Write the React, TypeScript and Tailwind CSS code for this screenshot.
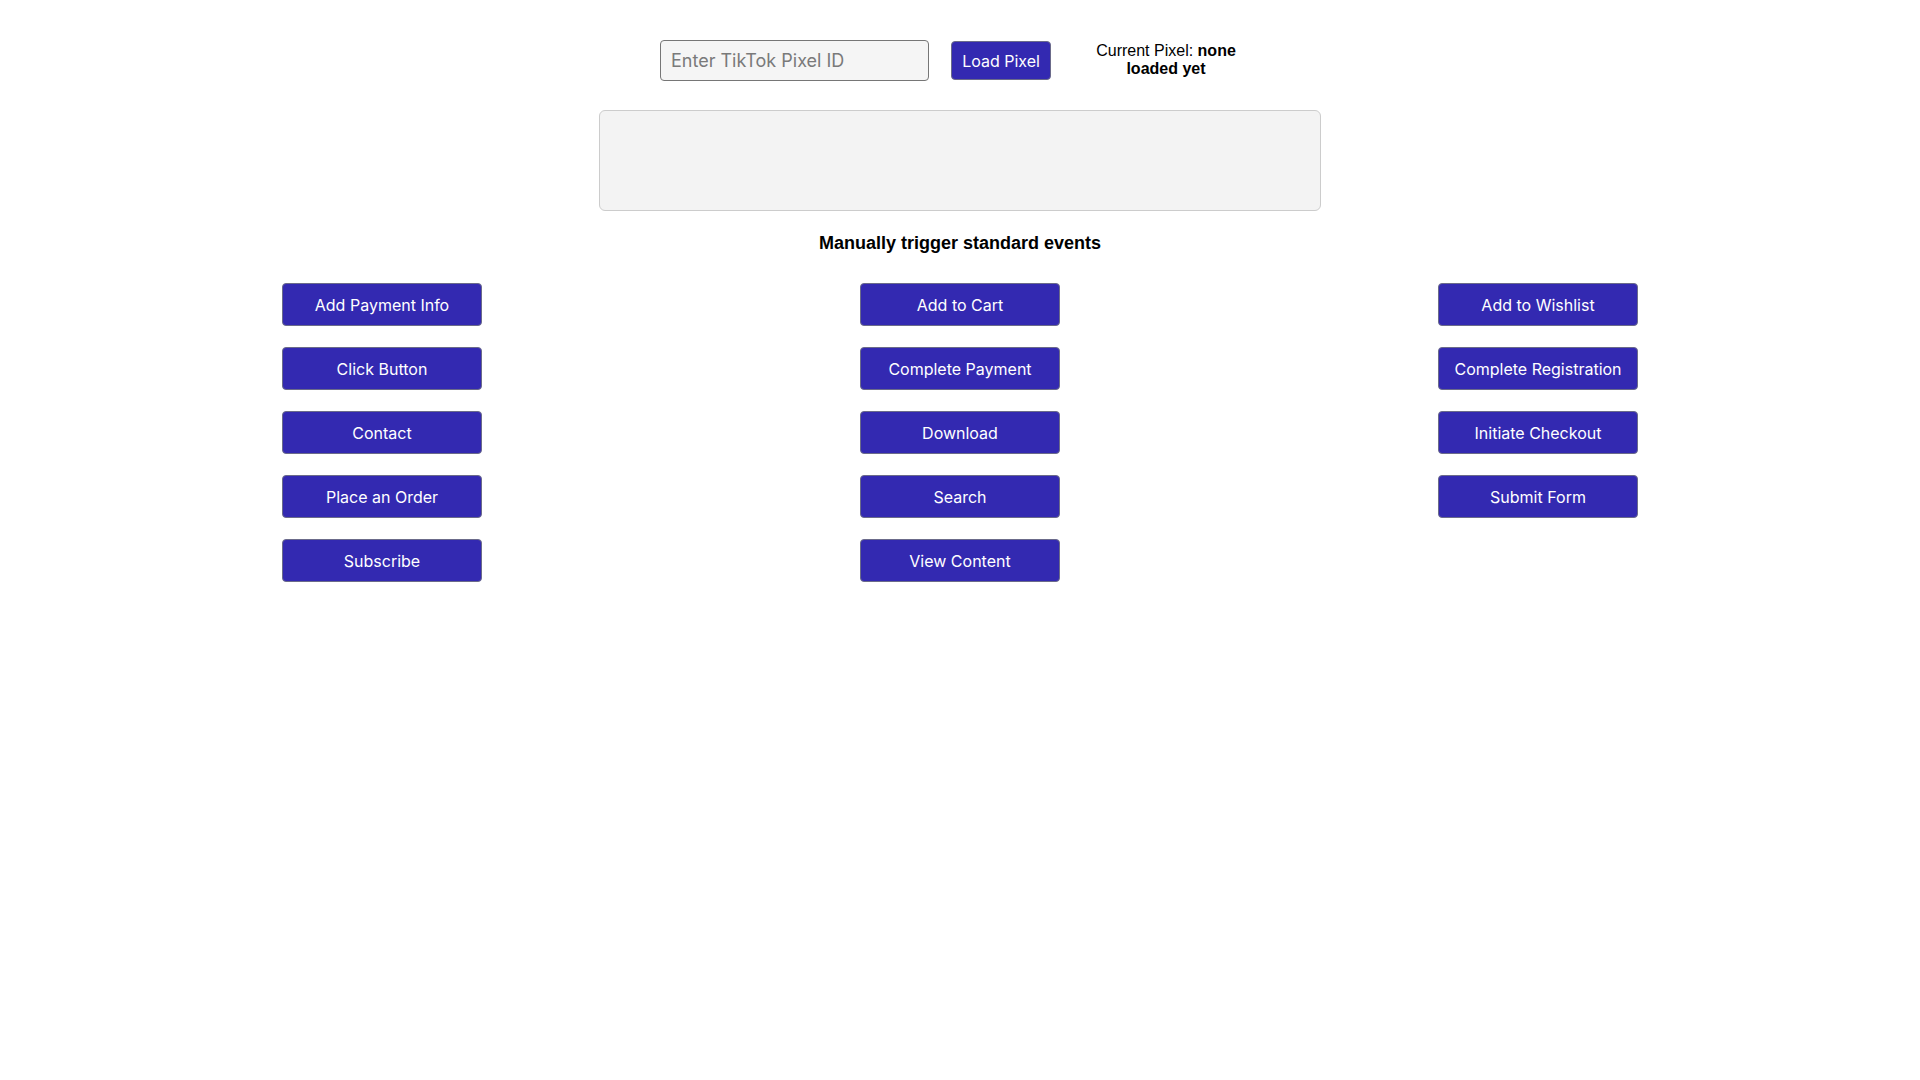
import React, { useState } from "react";

const events = [
  "Add Payment Info",
  "Add to Cart",
  "Add to Wishlist",
  "Click Button",
  "Complete Payment",
  "Complete Registration",
  "Contact",
  "Download",
  "Initiate Checkout",
  "Place an Order",
  "Search",
  "Submit Form",
  "Subscribe",
  "View Content",
];

const App = () => {
  const [pixelId, setPixelId] = useState("");

  return (
    <div className="min-h-screen bg-white text-black font-['Liberation_Sans',Arial,sans-serif]">
      {/* Pixel loader */}
      <div className="pt-[40px] w-[600px] mx-auto flex items-center">
        <input
          value={pixelId}
          onChange={(e) => setPixelId(e.target.value)}
          placeholder="Enter TikTok Pixel ID"
          className="w-[269px] h-[41px] px-[10px] bg-[#f5f5f5] border border-[#767676] rounded-[4px] text-[18px] font-['Inter',sans-serif] placeholder:text-[#7a7a7a] outline-none"
        />
        <button className="ml-[22px] w-[100px] h-[39px] bg-[#3329b1] border border-[#6b6b8a] rounded-[4px] text-white text-[16px] font-normal font-['Inter',sans-serif]">
          Load Pixel
        </button>
        <div className="ml-[40px] -mt-[2px] w-[150px] text-center text-[16px] leading-[18px]">
          Current Pixel: <span className="font-bold">none loaded yet</span>
        </div>
      </div>

      {/* Event log */}
      <div className="mt-[29px] mx-auto w-[722px] h-[101px] bg-[#f3f3f3] border border-[#cccccc] rounded-[6px]"></div>

      <h3 className="mt-[21px] text-center text-[18px] leading-[22px] font-bold">
        Manually trigger standard events
      </h3>

      {/* Event buttons */}
      <div className="mt-[29px] w-[1734px] mx-auto grid grid-cols-3 justify-items-center gap-y-[21px]">
        {events.map((name) => (
          <button
            key={name}
            className="w-[200px] h-[43px] bg-[#3329b1] border border-[#6b6b8a] rounded-[4px] text-white text-[16px] font-normal font-['Inter',sans-serif]"
          >
            {name}
          </button>
        ))}
      </div>
    </div>
  );
};

export default App;
